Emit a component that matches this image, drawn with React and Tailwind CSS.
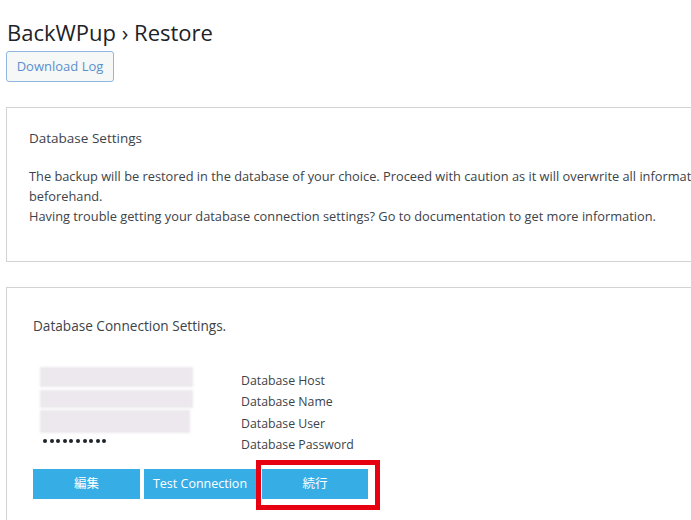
import React from "react";

const labels = ["Database Host", "Database Name", "Database User", "Database Password"];

const App = () => {
  return (
    <div className="w-[691px] h-[520px] overflow-hidden bg-white text-[#3c434a] font-['Open_Sans','Noto_Sans_CJK_JP',sans-serif]">
      <div className="w-[800px] pl-[6px]">
        <h1 className="mt-[17px] pl-[1px] text-[22px] leading-[30px] text-[#1d2327]">BackWPup › Restore</h1>

        <button className="mt-[4px] h-[31px] w-[108px] rounded-[3px] border border-[#8fb6e0] bg-[#f6f7f7] text-[13px] text-[#5a8fcd]">
          Download Log
        </button>

        {/* settings intro */}
        <div className="mt-[25px] h-[155px] border border-[#d3d3d3] pl-[22px] pt-[19px]">
          <h2 className="text-[13.5px] leading-[22px]">Database Settings</h2>
          <p className="mt-[17px] whitespace-nowrap text-[12.8px] leading-[20px]">
            The backup will be restored in the database of your choice. Proceed with caution as it will overwrite all information in the database
            <br />
            beforehand.
            <br />
            Having trouble getting your database connection settings? Go to documentation to get more information.
          </p>
        </div>

        {/* connection panel */}
        <div className="mt-[25px] h-[300px] border border-[#d3d3d3] pl-[26px] pt-[27px]">
          <h2 className="text-[13.6px] leading-[22px]">Database Connection Settings.</h2>

          <div className="mt-[30px] flex">
            <div className="w-[208px] pl-[7px]">
              <div className="h-[20px] w-[153px] bg-[#ece8ed] blur-[1px]" />
              <div className="mt-[3px] h-[18px] w-[153px] bg-[#ece8ed] blur-[1px]" />
              <div className="mt-[2px] h-[23px] w-[150px] bg-[#ece8ed] blur-[1px]" />
              <div className="mt-[6px] flex gap-[2.6px] pl-[3px]">
                {Array.from({ length: 10 }).map((_, i) => (
                  <span key={i} className="h-[4px] w-[4px] rounded-full bg-[#1d2327]" />
                ))}
              </div>
            </div>
            <div className="pt-[3px]">
              {labels.map((l) => (
                <div key={l} className="text-[12.3px] leading-[21.3px]">{l}</div>
              ))}
            </div>
          </div>

          <div className="mt-[14px] flex gap-[4px] text-[12.5px] text-white">
            <button className="h-[30px] w-[107px] bg-[#37ade6]">編集</button>
            <button className="h-[30px] w-[112px] bg-[#37ade6]">Test Connection</button>
            <div className="relative ml-[2px]">
              <button className="h-[30px] w-[106px] bg-[#37ade6]">続行</button>
              <div className="absolute -left-[6px] -top-[9px] h-[50px] w-[124px] border-[5px] border-[#e60012]" />
            </div>
          </div>
        </div>
      </div>
    </div>
  );
};

export default App;
